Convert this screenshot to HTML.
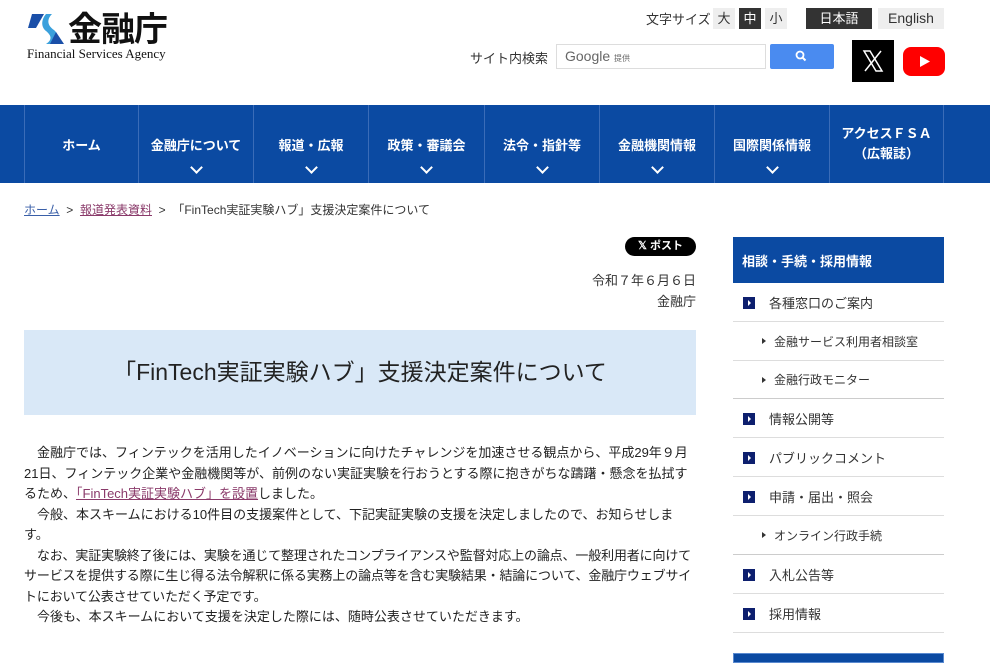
<!DOCTYPE html>
<html><head><meta charset="utf-8"><style>
*{margin:0;padding:0;box-sizing:border-box}
body{width:990px;height:660px;overflow:hidden;background:#fff;font-family:"Liberation Sans","Noto Sans CJK JP",sans-serif;color:#333;position:relative}
.a{position:absolute}
.nav{top:105px;left:0;width:990px;height:78px;background:#0b4aa2}
.nav .it{position:absolute;top:0;height:78px;border-left:1px solid #3a6cb8;color:#fff;font-weight:bold;font-size:13px;text-align:center}
.nav .it span{display:block}
.chev{width:9px;height:9px;border-right:2px solid #fff;border-bottom:2px solid #fff;transform:rotate(45deg);margin:9px auto 0}
.side{left:733px;width:211px}
.si{position:absolute;left:733px;width:211px;border-bottom:1px solid #ddd;font-size:13px;color:#333}
.sq{position:absolute;left:10px;width:12px;height:12px;background:#0d1f6e}
.sq:after{content:"";position:absolute;left:5px;top:3px;border-left:3px solid #fff;border-top:3px solid transparent;border-bottom:3px solid transparent}
.tri{position:absolute;left:29px;border-left:4px solid #333;border-top:3px solid transparent;border-bottom:3px solid transparent}
p.b{font-size:13px;line-height:20.5px;color:#222;white-space:nowrap}
</style></head><body>
<svg class="a" style="left:26px;top:12px" width="42" height="34" viewBox="0 0 42 34">
<path d="M6 2h12l-8 14H2z" fill="#1a4fa8"/><path d="M20 2h6c-6 6-4 12 2 16 6 5 4 12 0 14h-8c6-4 6-8 0-13-5-4-5-11 0-17z" fill="#3aa0dc"/><path d="M30 20l8 12H24z" fill="#1a4fa8"/>
</svg>
<div class="a" style="left:68px;top:10px;font-size:34px;font-weight:bold;color:#111;letter-spacing:-1px;line-height:40px">金融庁</div>
<div class="a" style="left:27px;top:46px;font-family:'Liberation Serif',serif;font-size:13px;color:#111">Financial Services Agency</div>

<div class="a" style="left:646px;top:9px;font-size:13px">文字サイズ</div>
<div class="a" style="left:713px;top:8px;width:22px;height:21px;background:#eee;font-size:13px;text-align:center;line-height:21px">大</div>
<div class="a" style="left:739px;top:8px;width:22px;height:21px;background:#333;color:#fff;font-size:13px;text-align:center;line-height:21px">中</div>
<div class="a" style="left:765px;top:8px;width:22px;height:21px;background:#eee;font-size:13px;text-align:center;line-height:21px">小</div>
<div class="a" style="left:806px;top:8px;width:66px;height:21px;background:#333;color:#fff;font-size:13px;text-align:center;line-height:21px">日本語</div>
<div class="a" style="left:878px;top:8px;width:66px;height:21px;background:#eee;font-size:14px;text-align:center;line-height:21px">English</div>

<div class="a" style="left:470px;top:48px;font-size:13px">サイト内検索</div>
<div class="a" style="left:556px;top:44px;width:210px;height:25px;border:1px solid #ddd;font-size:14px;color:#666;padding:3px 8px">Google <span style="font-size:8px">提供</span></div>
<div class="a" style="left:770px;top:44px;width:64px;height:25px;background:#4a8bf0;border-radius:2px"><svg width="64" height="25"><circle cx="30" cy="11" r="3.5" fill="none" stroke="#fff" stroke-width="1.8"/><path d="M32.5 13.5l3 3" stroke="#fff" stroke-width="2"/></svg></div>
<div class="a" style="left:852px;top:40px;width:42px;height:42px;background:#000"><svg width="42" height="42"><path d="M12 11h6l12 20h-6z" fill="none" stroke="#fff" stroke-width="1.5"/><path d="M29 11L13 31" stroke="#fff" stroke-width="1.5"/></svg></div>
<div class="a" style="left:903px;top:47px;width:42px;height:29px;background:#f00;border-radius:8px"><svg width="42" height="29"><path d="M17 9l10 5.5-10 5.5z" fill="#fff"/></svg></div>

<div class="a nav">
<div class="it" style="left:24px;width:114px;padding-top:30px">ホーム</div>
<div class="it" style="left:138px;width:115px;padding-top:30px"><span>金融庁について</span><div class="chev"></div></div>
<div class="it" style="left:253px;width:115px;padding-top:30px"><span>報道・広報</span><div class="chev"></div></div>
<div class="it" style="left:368px;width:116px;padding-top:30px"><span>政策・審議会</span><div class="chev"></div></div>
<div class="it" style="left:484px;width:115px;padding-top:30px"><span>法令・指針等</span><div class="chev"></div></div>
<div class="it" style="left:599px;width:115px;padding-top:30px"><span>金融機関情報</span><div class="chev"></div></div>
<div class="it" style="left:714px;width:115px;padding-top:30px"><span>国際関係情報</span><div class="chev"></div></div>
<div class="it" style="left:829px;width:115px;padding-top:19px;line-height:20px;border-right:1px solid #3a6cb8">アクセスＦＳＡ<br>（広報誌）</div>
</div>

<div class="a" style="left:24px;top:201px;font-size:12px;color:#333"><span style="color:#3a5fa8;text-decoration:underline">ホーム</span> &nbsp;&gt;&nbsp; <span style="color:#8a3a6a;text-decoration:underline">報道発表資料</span> &nbsp;&gt;&nbsp; 「FinTech実証実験ハブ」支援決定案件について</div>

<div class="a" style="left:625px;top:237px;width:71px;height:19px;background:#000;border-radius:10px;color:#fff;font-size:11px;font-weight:bold;text-align:center;line-height:19px">𝕏 ポスト</div>
<div class="a" style="right:294px;top:270px;font-size:13px;text-align:right;line-height:21px">令和７年６月６日<br>金融庁</div>

<div class="a" style="left:24px;top:330px;width:672px;height:85px;background:#d9e8f7;font-size:23px;text-align:center;line-height:85px;color:#222">「FinTech実証実験ハブ」支援決定案件について</div>

<div class="a" style="left:24px;top:443px;width:674px">
<p class="b">　金融庁では、フィンテックを活用したイノベーションに向けたチャレンジを加速させる観点から、平成29年９月<br>21日、フィンテック企業や金融機関等が、前例のない実証実験を行おうとする際に抱きがちな躊躇・懸念を払拭す<br>るため、<span style="color:#8a3a6a;text-decoration:underline">「FinTech実証実験ハブ」を設置</span>しました。</p>
<p class="b">　今般、本スキームにおける10件目の支援案件として、下記実証実験の支援を決定しましたので、お知らせしま<br>す。</p>
<p class="b" style="letter-spacing:-0.15px">　なお、実証実験終了後には、実験を通じて整理されたコンプライアンスや監督対応上の論点、一般利用者に向けて<br>サービスを提供する際に生じ得る法令解釈に係る実務上の論点等を含む実験結果・結論について、金融庁ウェブサイ<br>トにおいて公表させていただく予定です。</p>
<p class="b">　今後も、本スキームにおいて支援を決定した際には、随時公表させていただきます。</p>
</div>

<div class="a side" style="top:237px;height:46px;background:#0b4aa2;color:#fff;font-weight:bold;font-size:13px;padding:14px 9px">相談・手続・採用情報</div>
<div class="si" style="top:283px;height:39px"><div class="sq" style="top:14px"></div><span class="a" style="left:36px;top:10px">各種窓口のご案内</span></div>
<div class="si" style="top:322px;height:39px;font-size:12px"><div class="tri" style="top:16px"></div><span class="a" style="left:41px;top:11px">金融サービス利用者相談室</span></div>
<div class="si" style="top:361px;height:38px;font-size:12px;border-color:#ccc"><div class="tri" style="top:16px"></div><span class="a" style="left:41px;top:10px">金融行政モニター</span></div>
<div class="si" style="top:399px;height:39px"><div class="sq" style="top:14px"></div><span class="a" style="left:36px;top:10px">情報公開等</span></div>
<div class="si" style="top:438px;height:39px"><div class="sq" style="top:14px"></div><span class="a" style="left:36px;top:10px">パブリックコメント</span></div>
<div class="si" style="top:477px;height:39px"><div class="sq" style="top:14px"></div><span class="a" style="left:36px;top:10px">申請・届出・照会</span></div>
<div class="si" style="top:516px;height:39px;font-size:12px;border-color:#ccc"><div class="tri" style="top:16px"></div><span class="a" style="left:41px;top:11px">オンライン行政手続</span></div>
<div class="si" style="top:555px;height:39px"><div class="sq" style="top:14px"></div><span class="a" style="left:36px;top:10px">入札公告等</span></div>
<div class="si" style="top:594px;height:39px"><div class="sq" style="top:14px"></div><span class="a" style="left:36px;top:10px">採用情報</span></div>
<div class="a side" style="top:653px;height:10px;background:#0b4aa2;border:1px solid #5a8ad0"></div>
</body></html>
